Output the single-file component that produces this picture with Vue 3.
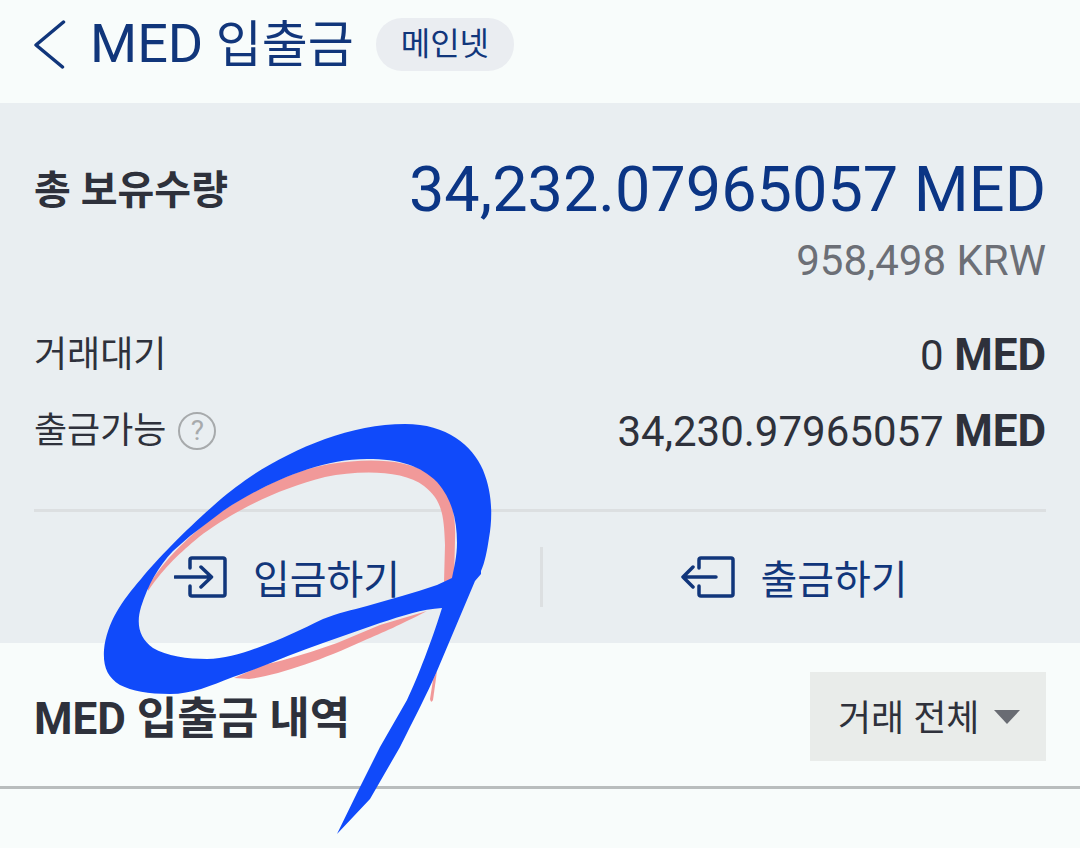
<script setup>
import { ref } from 'vue'

const filter = ref('all')
const rows = [
  { id: 'pending', label: '거래대기', amount: '0', help: false },
  { id: 'available', label: '출금가능', amount: '34,230.97965057', help: true },
]
</script>

<template>
  <div class="screen">
    <header class="header">
      <button class="back" type="button" aria-label="뒤로">
        <svg width="32" height="50" viewBox="0 0 32 50" aria-hidden="true">
          <path d="M29.500 2 2 25 28.500 47" />
        </svg>
      </button>
      <h1 class="title"><span class="latin">MED</span> 입출금</h1>
      <span class="badge">메인넷</span>
    </header>

    <main>
      <section class="panel">
        <div class="total">
          <h2 class="total-label">총 보유수량</h2>
          <div class="total-values">
            <p class="total-amount">34,232.07965057 MED</p>
            <p class="total-krw">958,498 KRW</p>
          </div>
        </div>

        <dl class="rows">
          <div v-for="row in rows" :key="row.id" class="row">
            <dt>
              {{ row.label }}
              <button v-if="row.help" class="help" type="button" aria-label="도움말">?</button>
            </dt>
            <dd>{{ row.amount }} <b>MED</b></dd>
          </div>
        </dl>

        <div class="actions">
          <button class="action" type="button">
            <svg width="54" height="42" viewBox="0 0 54 42" aria-hidden="true">
              <path d="M16 12V4q0-2 2-2H49q2 0 2 2V38q0 2-2 2H18q-2 0-2-2V30M1 21H37M27 11 37.500 21 27 31" />
            </svg>
            입금하기
          </button>
          <button class="action" type="button">
            <svg width="54" height="42" viewBox="0 0 54 42" aria-hidden="true">
              <path d="M18 12V4q0-2 2-2H50q2 0 2 2V38q0 2-2 2H20q-2 0-2-2V30M35 21H2M12 11 2 21 12 31" />
            </svg>
            출금하기
          </button>
        </div>
      </section>

      <section class="history">
        <h2 class="history-title">MED 입출금 내역</h2>
        <div class="filter">
          <select v-model="filter" aria-label="거래 구분">
            <option value="all">거래 전체</option>
          </select>
          <svg class="caret" width="26" height="14" viewBox="0 0 26 14" aria-hidden="true">
            <path d="M0 0H26L13 14Z" />
          </svg>
        </div>
      </section>
    </main>

    <svg class="ink" width="1080" height="848" viewBox="0 0 1080 848" aria-hidden="true">
      <path
        class="pink"
        d="M148 587C160 565 183 542 205 524C236 499 290 470 330 464C368 458 405 459 428 473C452 488 456 515 455 540L454 580L444 582L445 545C444 515 442 500 424 486C403 470 360 470 325 477C276 489 229 514 199 537C180 553 166 565 148 591Z"
      />
      <path class="pink" d="M234 678L263 665C290 659 314 651 337 643L380 625L427 611C400 625 384 632 363 641C322 660 279 675 249 679Z" />
      <path class="pink" d="M433 680L437 671L433 700Q431 704 430 699Z" />
      <path
        class="blue"
        fill-rule="evenodd"
        d="M405 424C447 424 472 445 483 470C492 492 493 515 489 538C487 551 485 562 481 571V574L475 581L437 671C427 694 414 719 400 747L370 799L337 834L357 793L380 747L407 700C418 677 432 640 442 608C422 609 402 616 380 623L323 643C293 653 263 667 233 677C210 686 192 694 170 694C148 694 132 691 120 685C107 677 103 666 104 650C107 622 122 601 141 579C157 559 187 529 213 506C226 494 237 486 250 477C292 449 350 424 405 424Z
           M367 459C400 459 421 466 437 482C452 499 457 520 457 543C457 556 454 568 452 578L437 585C414 593 390 599 367 606C352 610 338 613 323 619C302 629 280 640 257 648C240 654 224 659 207 659C188 659 166 656 153 648C139 638 136 624 141 607C148 585 158 567 173 551L190 536L223 511C256 489 313 459 367 459Z"
      />
    </svg>
  </div>
</template>

<style>
body {
  margin: 0;
  background: #f8fcfb;
}
</style>

<style scoped>
.screen {
  --navy: #11367b;
  --ink: #2e313b;
  --edge: 34px;
  position: relative;
  min-height: 100vh;
  overflow: hidden;
  background: #f8fcfb;
  color: var(--ink);
  font-family: Roboto, "Noto Sans CJK KR", sans-serif;
}

h1,
h2,
p,
dl,
dd {
  margin: 0;
}

button,
select {
  font: inherit;
  color: inherit;
  border: 0;
  margin: 0;
  cursor: pointer;
}

button {
  padding: 0;
  background: none;
}

.header {
  display: flex;
  align-items: center;
  box-sizing: border-box;
  height: 103px;
  padding: 0 var(--edge) 14px;
  color: var(--navy);
}

.back {
  display: flex;
  margin-right: 24px;
}

.back path,
.action path {
  fill: none;
  stroke: var(--navy);
  stroke-width: 3.500;
  stroke-linecap: round;
  stroke-linejoin: round;
}

.title {
  font-size: 50px;
  font-weight: 400;
  line-height: 60px;
}

.title .latin {
  font-size: 54px;
}

.badge {
  margin-left: 22px;
  padding: 0 25px;
  border-radius: 26px;
  background: #eaedf1;
  font-size: 32px;
  line-height: 53px;
}

.panel {
  padding: 54px var(--edge) 0;
  background: #e9eef1;
}

.total {
  display: flex;
  justify-content: space-between;
}

.total-label {
  font-size: 40px;
  font-weight: 700;
  line-height: 68px;
}

.total-values {
  text-align: right;
}

.total-amount {
  color: #0b3585;
  font-size: 63px;
  line-height: 66px;
}

.total-krw {
  margin-top: 12px;
  color: #6c6f76;
  font-size: 42px;
  line-height: 52px;
}

.rows {
  margin-top: 30px;
  padding-bottom: 40px;
  border-bottom: 3px solid #dcdfe1;
}

.row {
  display: flex;
  justify-content: space-between;
  align-items: center;
  height: 76px;
}

dt {
  display: flex;
  align-items: center;
  gap: 12px;
  font-size: 36px;
  line-height: 50px;
}

dd {
  font-size: 42px;
  line-height: 50px;
}

dd b {
  font-size: 44px;
}

.help {
  box-sizing: border-box;
  width: 38px;
  height: 38px;
  border: 2px solid #a7aaac;
  border-radius: 50%;
  color: #a7aaac;
  font-size: 28px;
  line-height: 34px;
}

.actions {
  display: grid;
  grid-template-columns: 1fr 1fr;
  padding: 35px 0 36px;
}

.action {
  display: flex;
  align-items: center;
  justify-content: center;
  gap: 25px;
  height: 60px;
  color: var(--navy);
  font-size: 40px;
}

.action + .action {
  border-left: 3px solid #dcdfe1;
}

.history {
  display: flex;
  align-items: center;
  justify-content: space-between;
  padding: 29px var(--edge) 25px;
  border-bottom: 3px solid #b9bdbd;
}

.history-title {
  padding-top: 4px;
  font-size: 44px;
  font-weight: 700;
  line-height: 60px;
}

.filter {
  position: relative;
  display: flex;
}

select {
  appearance: none;
  height: 89px;
  padding: 4px 66px 0 28px;
  border-radius: 0;
  background: #e9ecea;
  font-size: 36px;
}

.caret {
  position: absolute;
  top: 38px;
  right: 26px;
  fill: #696c73;
  pointer-events: none;
}

.ink {
  position: absolute;
  top: 0;
  left: 0;
  pointer-events: none;
}

.blue {
  fill: #104afa;
}

.pink {
  fill: #f19999;
}
</style>
